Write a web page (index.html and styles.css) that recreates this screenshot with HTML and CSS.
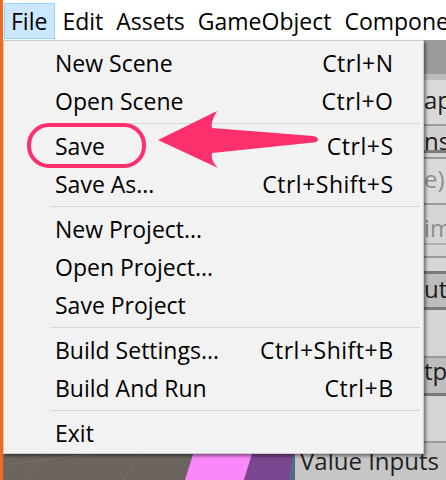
FILE: index.html
```html
<!DOCTYPE html>
<html>
<head>
<meta charset="utf-8">
<link rel="stylesheet" href="styles.css">
</head>
<body>
<div class="app">
  <nav class="menubar">
    <span class="mb-item active">File</span>
    <span class="mb-item">Edit</span>
    <span class="mb-item">Assets</span>
    <span class="mb-item">GameObject</span>
    <span class="mb-item">Component</span>
  </nav>
  <div class="workspace">
    <div class="scene">
      <svg class="scene-art" width="292" height="440" viewBox="0 0 292 440">
        <rect width="292" height="440" fill="#6b645f"/>
        <path d="M0 425 L160 405 M20 440 L60 395 M120 440 L150 395 M0 400 L292 380" stroke="#77706b" stroke-width="1" fill="none"/>
        <polygon points="210,350 269,350 241,440 182,440" fill="#fb88fb"/>
        <polygon points="269,350 292,350 292,420 286,440 241,440" fill="#7a4690"/>
        <polygon points="292,400 292,440 286,440" fill="#4f6b88"/>
      </svg>
    </div>
    <aside class="inspector">
      <div class="band b-head"></div>
      <div class="band b-light1"></div>
      <div class="row r-btn1"><span class="peek">ap</span></div>
      <div class="band line-mid"></div>
      <div class="row r-btn2"><span class="peek">ns</span></div>
      <div class="band line-dark"></div>
      <div class="band b-gap"></div>
      <div class="band line-mid"></div>
      <div class="row r-field dim"><span class="peek">e)</span></div>
      <div class="band line-mid"></div>
      <div class="row r-field2 dim"><span class="peek">im</span></div>
      <div class="band line-soft"></div>
      <div class="band b-gap2"></div>
      <div class="band line-mid"></div>
      <div class="band b-gap3"></div>
      <div class="band line-dark"></div>
      <div class="row r-dark"><span class="peek">ut</span></div>
      <div class="band line-dark"></div>
      <div class="band b-space"></div>
      <div class="band line-mid"></div>
      <div class="row r-dark2"><span class="peek">tpu</span></div>
      <div class="band line-dark"></div>
      <div class="band b-space2"></div>
      <div class="band line-mid"></div>
      <div class="row r-value">Value Inputs</div>
    </aside>
  </div>

  <div class="dropdown">
    <div class="mi"><span>New Scene</span><span class="key">Ctrl+N</span></div>
    <div class="mi"><span>Open Scene</span><span class="key">Ctrl+O</span></div>
    <div class="sep"></div>
    <div class="mi"><span>Save</span><span class="key">Ctrl+S</span></div>
    <div class="mi"><span>Save As...</span><span class="key">Ctrl+Shift+S</span></div>
    <div class="sep"></div>
    <div class="mi"><span>New Project...</span></div>
    <div class="mi"><span>Open Project...</span></div>
    <div class="mi"><span>Save Project</span></div>
    <div class="sep"></div>
    <div class="mi"><span>Build Settings...</span><span class="key">Ctrl+Shift+B</span></div>
    <div class="mi"><span>Build And Run</span><span class="key">Ctrl+B</span></div>
    <div class="sep"></div>
    <div class="mi"><span>Exit</span></div>
  </div>

  <svg class="callout" width="446" height="480" viewBox="0 0 446 480">
    <rect x="29" y="125" width="115" height="41" rx="20" ry="20" fill="none" stroke="#fd2f6d" stroke-width="4"/>
    <path d="M158,140 L217,111 C213,118 211,123 212,128 L313,136 Q318,137 318,139.5 Q318,142 313,142.5 L212,153 C211,158 213,163 218,168 Z" fill="#fd2f6d"/>
  </svg>
</div>
</body>
</html>
```

FILE: styles.css
```css
html, body {
  margin: 0;
  padding: 0;
}
body {
  width: 446px;
  height: 480px;
  overflow: hidden;
  font-family: "Open Sans", "Noto Sans", sans-serif;
  color: #000;
}
.app {
  position: relative;
  width: 446px;
  height: 480px;
  box-sizing: border-box;
  border-left: 3px solid #f26a22;
  display: flex;
  flex-direction: column;
  overflow: hidden;
}
.menubar {
  height: 40px;
  flex: none;
  display: flex;
  align-items: flex-start;
  background: #fff;
  padding-left: 1px;
  white-space: nowrap;
  overflow: hidden;
  font-size: 23px;
}
.mb-item {
  box-sizing: border-box;
  margin-top: 3px;
  height: 36px;
  line-height: 34px;
  padding: 0 5px 0 6px;
  border: 1px solid transparent;
}
.mb-item.active {
  background: #cce8ff;
  border-color: #99d1ff;
  padding-right: 7px;
}
.workspace {
  flex: 1;
  display: flex;
  min-height: 0;
}
.scene {
  flex: 1;
  overflow: hidden;
}
.scene-art {
  display: block;
}
.inspector {
  width: 151px;
  flex: none;
  display: flex;
  flex-direction: column;
  background: #d6d6d6;
  font-size: 24px;
  color: #1e1e1e;
  white-space: nowrap;
  overflow: hidden;
}
.band { flex: none; }
.b-head { height: 34px; background: #9c9c9c; }
.b-light1 { height: 6px; background: #bdbdbd; }
.line-mid { height: 2px; background: #9a9a9a; }
.line-dark { height: 3px; background: #7a7a7a; }
.line-soft { height: 2px; background: #b0b0b0; }
.b-gap { height: 4px; background: #d3d3d3; }
.b-gap2 { height: 11px; background: #d4d4d4; }
.b-gap3 { height: 13px; background: #d6d6d6; }
.b-space { height: 46px; background: #d5d5d5; }
.b-space2 { height: 45px; background: #d5d5d5; }
.row { flex: none; overflow: hidden; }
.peek { padding-left: 129px; }
.r-btn1 { height: 44px; line-height: 40px; background: #d9d9d9; }
.r-btn2 { height: 24px; line-height: 30px; background: #cfcfcf; }
.r-field { height: 44px; line-height: 40px; background: #dadada; }
.r-field2 { height: 38px; line-height: 46px; background: #d6d6d6; }
.dim { color: #8e8e8e; }
.r-dark { height: 33px; line-height: 30px; background: #bdbdbd; }
.r-dark2 { height: 35px; line-height: 26px; background: #bdbdbd; }
.r-value { height: 40px; line-height: 36px; background: #c6c6c6; padding-left: 5px; color: #222; }

.dropdown {
  position: absolute;
  left: 0;
  top: 40px;
  width: 421px;
  box-sizing: border-box;
  background: #f2f2f2;
  border: 1px solid #cccccc;
  padding: 3px 0 1px 0;
  box-shadow: 2px 2px 3px rgba(0, 0, 0, 0.45);
  font-size: 23px;
  z-index: 2;
}
.mi {
  height: 38px;
  line-height: 38px;
  display: flex;
  justify-content: space-between;
  padding: 0 30px 0 51px;
  white-space: nowrap;
}
.key {
  letter-spacing: 0.5px;
  margin-right: -0.5px;
}
.sep {
  height: 1px;
  background: #d7d7d7;
  margin: 3px 3px 3px 46px;
}
.callout {
  position: absolute;
  left: -3px;
  top: 0;
  z-index: 3;
  pointer-events: none;
}
```
